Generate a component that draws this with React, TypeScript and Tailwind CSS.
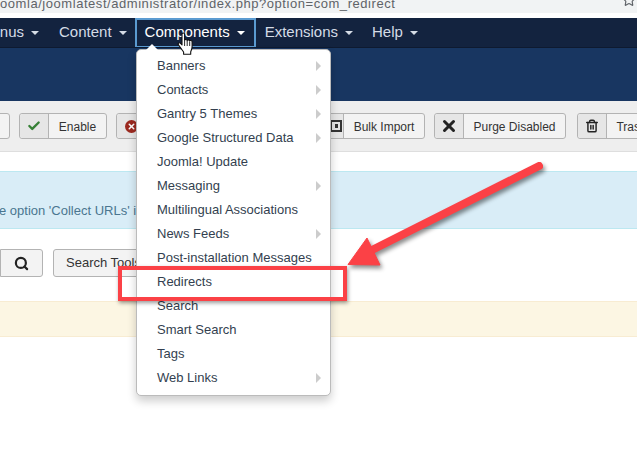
import { Check, Search, Star, Trash2, X } from "lucide-react";

const font = { fontFamily: '"Liberation Sans", Arial, sans-serif' };

const menuItems: { label: string; sub?: boolean }[] = [
  { label: "Banners", sub: true },
  { label: "Contacts", sub: true },
  { label: "Gantry 5 Themes", sub: true },
  { label: "Google Structured Data", sub: true },
  { label: "Joomla! Update" },
  { label: "Messaging", sub: true },
  { label: "Multilingual Associations" },
  { label: "News Feeds", sub: true },
  { label: "Post-installation Messages" },
  { label: "Redirects" },
  { label: "Search" },
  { label: "Smart Search" },
  { label: "Tags" },
  { label: "Web Links", sub: true },
];

const Caret = ({ color = "border-t-[#d5dce6]" }: { color?: string }) => (
  <span className={`inline-block ml-[7px] align-middle w-0 h-0 border-x-[4px] border-x-transparent border-t-[4px] ${color}`} />
);

const NavItem = ({ label, active, className = "" }: { label: string; active?: boolean; className?: string }) => (
  <div
    className={`h-[30px] flex items-center whitespace-nowrap text-[15px] ${active ? "border-2 border-[#5b9bd1] text-white pl-[8px] pr-[9px]" : "text-[#d5dce6] px-[10px]"} ${className}`}
  >
    {label}
    <Caret color={active ? "border-t-white" : "border-t-[#d5dce6]"} />
  </div>
);

const ToolButton = ({ icon, label, width, className = "" }: { icon?: React.ReactNode; label?: string; width: string; className?: string }) => (
  <div className={`h-[26px] shrink-0 flex rounded-[3px] border border-[#b3b3b3] bg-[#f3f3f3] text-[12px] text-[#333] ${width} ${className}`}>
    <div className="w-[29px] shrink-0 flex items-center justify-center bg-[#e6e6e6] border-r border-[#b3b3b3] rounded-l-[3px]">{icon}</div>
    <div className="flex-1 flex items-center justify-center whitespace-nowrap overflow-hidden pt-[1px]">{label}</div>
  </div>
);

export default function App() {
  return (
    <div className="w-[637px] h-[473px] relative overflow-hidden bg-white" style={font}>
      {/* browser url bar */}
      <div className="h-[13px] bg-[#f1f3f4] flex justify-between overflow-hidden">
        <div className="text-[13px] leading-[13px] -mt-[3px] text-[#5f6368] whitespace-nowrap tracking-[0.55px]">oomla/joomlatest/administrator/index.php?option=com_redirect</div>
        <Star className="w-[14px] h-[14px] -mt-[7px] mr-[1px] text-[#5f6368]" />
      </div>
      <div className="h-[5px] bg-white" />

      {/* nav */}
      <div className="h-[30px] bg-[#13233f] border-b border-[#0e1a30] flex items-center overflow-hidden">
        <div className="-ml-[31px] flex items-center">
          <NavItem label="Menus" />
          <NavItem label="Content" className="-mr-[2px]" />
          <NavItem label="Components" active />
          <NavItem label="Extensions" className="-ml-[1px] -mr-[1px]" />
          <NavItem label="Help" />
        </div>
      </div>

      {/* title band */}
      <div className="h-[53px] bg-[#183661]" />

      {/* toolbar */}
      <div className="h-[51px] bg-[#eeeeee] border-b border-[#dedede] flex items-center gap-[9px] overflow-hidden">
        <ToolButton width="w-[60px]" className="-ml-[50px]" />
        <ToolButton
          label="Enable"
          width="w-[88px]"
          icon={<Check className="w-[14px] h-[14px] text-[#378137]" strokeWidth={4} />}
        />
        <ToolButton
          label="Disable"
          width="w-[189px]"
          icon={
            <span className="w-[13px] h-[13px] rounded-full bg-[#9c2a20] flex items-center justify-center">
              <X className="w-[9px] h-[9px] text-white" strokeWidth={4} />
            </span>
          }
        />
        <ToolButton
          label="Bulk Import"
          width="w-[111px]"
          icon={<span className="w-[12px] h-[12px] border-2 border-[#333] ml-[14px] flex items-center justify-center"><span className="w-[3px] h-[4px] bg-[#333]" /></span>}
        />
        <ToolButton
          label="Purge Disabled"
          width="w-[132px]"
          icon={<X className="w-[18px] h-[18px] text-[#222]" strokeWidth={4} />}
        />
        <ToolButton
          label="Trash"
          width="w-[80px]"
          className="ml-[2px]"
          icon={<Trash2 className="w-[14px] h-[14px] text-[#222]" strokeWidth={2.5} />}
        />
      </div>

      <div className="h-[19px] bg-white" />

      {/* info alert */}
      <div className="h-[58px] bg-[#d9edf7] border-y border-[#bce8f1] flex items-end pb-[8px] overflow-hidden">
        <div className="-ml-[1px] text-[13px] leading-[18px] text-[#4a7690] whitespace-nowrap">e option 'Collect URLs' is enabled.</div>
      </div>

      {/* search row */}
      <div className="h-[72px] bg-white pt-[20px] flex gap-[10px] overflow-hidden">
        <div className="w-[43px] h-[28px] rounded-r-[3px] border border-[#b3b3b3] bg-[#f3f3f3] flex items-center justify-center shrink-0">
          <Search className="w-[15px] h-[15px] text-[#222]" strokeWidth={3.5} />
        </div>
        <div className="w-[110px] h-[28px] rounded-[3px] border border-[#b3b3b3] bg-[#f3f3f3] text-[13px] text-[#333] flex items-center pl-[12px] shrink-0 whitespace-nowrap">Search Tools</div>
      </div>

      {/* warning alert */}
      <div className="h-[36px] bg-[#fcf6e3] border-y border-[#f8ecd2]" />

      {/* components dropdown */}
      <div className="absolute left-[136px] top-[49px] w-[195px] pt-[4px] pb-[5px] bg-white border border-[#bbbbbb] rounded-[5px] shadow-[0_5px_10px_rgba(0,0,0,0.2)]">
        <div className="absolute left-[9px] -top-[6px] w-0 h-0 border-x-[6px] border-x-transparent border-b-[6px] border-b-white" />
        {menuItems.map((item) => (
          <div key={item.label} className="h-[24px] pl-[20px] pr-[9px] flex items-center justify-between text-[13px] text-[#333f4f] whitespace-nowrap">
            {item.label}
            {item.sub && <span className="w-0 h-0 border-y-[5px] border-y-transparent border-l-[5px] border-l-[#cccccc]" />}
          </div>
        ))}
      </div>

      {/* hand cursor */}
      <svg className="absolute left-[177px] top-[32px]" width="18" height="24" viewBox="0 0 18 24">
        <path
          d="M5 2.2c0-1.600 2.600-1.600 2.600 0v6.300c.2-1.300 2.500-1.300 2.600.2.3-1.200 2.400-1.100 2.500.4.4-1 2.300-.8 2.400.7v4.600c0 2.600-.8 3.600-1.400 5.400v2.400H6.600v-2.200C5.200 18 2.800 14.600 1.600 13c-1.200-1.600.6-3 2-1.600L5 12.900V2.200z"
          fill="#fff"
          stroke="#111"
          strokeWidth="1.1"
          strokeLinejoin="round"
        />
        <path d="M7.600 9v5M10.200 9v5M12.700 10v4" stroke="#111" strokeWidth="0.9" fill="none" />
      </svg>

      {/* red annotation */}
      <div className="absolute left-[118px] top-[266px] w-[229px] h-[35px] border-[4px] border-[#fb4146] shadow-[1px_2px_4px_rgba(0,0,0,0.4)]" />
      <svg className="absolute left-[340px] top-[155px] drop-shadow-[2px_3px_2px_rgba(0,0,0,0.45)]" width="210" height="120" viewBox="340 155 210 120">
        <path d="M539 166 L372 250" stroke="#fb4146" strokeWidth="8" strokeLinecap="round" fill="none" />
        <path d="M348 264.500 L367 238 L380 265 Z" fill="#fb4146" stroke="#fb4146" strokeWidth="1" strokeLinejoin="round" />
      </svg>
    </div>
  );
}
